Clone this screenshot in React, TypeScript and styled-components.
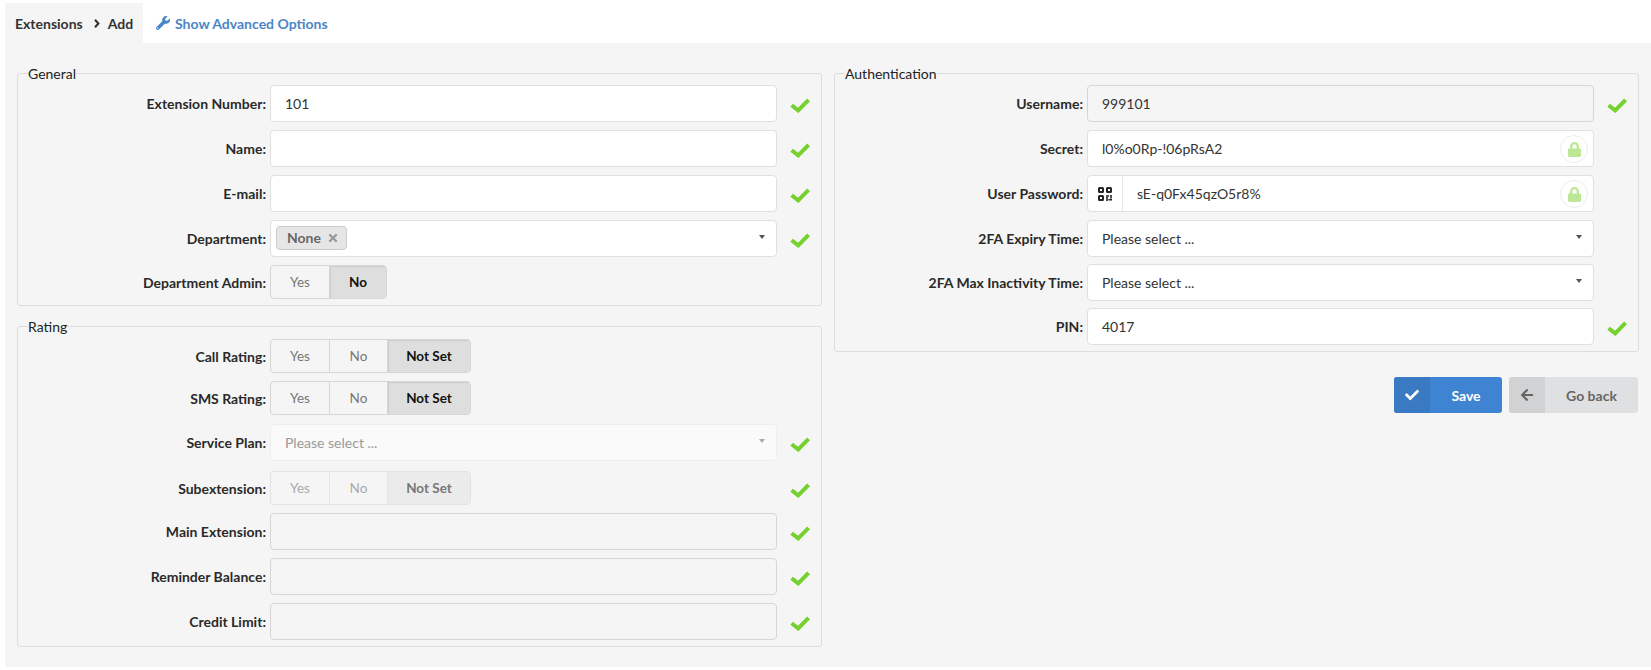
import React from 'react';
import styled, { createGlobalStyle } from 'styled-components';
import { FaArrowLeft, FaCheck, FaLock, FaTimes, FaWrench } from 'react-icons/fa';

const GlobalStyle = createGlobalStyle`
    html, body {
        margin: 0;
        background: #fff;
    }
    body {
        font-family: Lato, "Open Sans", sans-serif;
        font-size: 14px;
        color: #333;
    }
`;

const Page = styled.div`
    padding: 3px 0 3px 5px;
`;

const TabBar = styled.div`
    display: flex;
    height: 40px;
    align-items: stretch;
    font-weight: 700;
    font-size: 14px;
`;

const Crumbs = styled.div`
    display: flex;
    align-items: center;
    width: 138px;
    box-sizing: border-box;
    padding-left: 10px;
    background: #f5f5f5;
    color: #333;
    svg {
        margin: 0 8px 0 11px;
    }
`;

const AdvancedLink = styled.a`
    display: flex;
    align-items: center;
    gap: 5px;
    margin-left: 13px;
    color: #4a86c6;
    svg {
        font-size: 14px;
    }
`;

const Content = styled.div`
    display: grid;
    grid-template-columns: 805px 805px;
    gap: 12px;
    height: 624px;
    box-sizing: border-box;
    padding: 22px 12px 0;
    background: #f5f5f5;
`;

const Column = styled.div`
    display: flex;
    flex-direction: column;
    gap: 12px;
`;

const Box = styled.fieldset`
    margin: 0;
    padding: 3px 0 6px;
    min-width: 0;
    border: 1px solid #ddd;
    border-radius: 3px;
`;

const Legend = styled.legend`
    margin-left: 10px;
    padding: 0;
    line-height: 17px;
    font-size: 14px;
    color: #222;
`;

const Row = styled.div<{ $top?: number }>`
    display: flex;
    align-items: stretch;
    margin-top: ${p => p.$top ?? 8}px;
`;

const Label = styled.label`
    flex: 0 0 248px;
    margin-right: 4px;
    align-self: center;
    text-align: right;
    font-weight: 700;
    font-size: 14px;
    color: #2a2a2a;
`;

const Control = styled.div`
    flex: 1;
    min-width: 0;
    display: flex;
`;

const StatusCell = styled.div`
    flex: 0 0 44px;
    display: flex;
    align-items: center;
    box-sizing: border-box;
    padding: 4px 0 0 13px;
`;

const Field = styled.div<{ $variant?: 'plain' | 'readonly' | 'disabled' }>`
    position: relative;
    flex: 1;
    display: flex;
    align-items: center;
    height: 37px;
    box-sizing: border-box;
    padding-left: 14px;
    border-radius: 4px;
    border: 1px solid ${p => (p.$variant === 'readonly' ? '#d6d6d6' : p.$variant === 'disabled' ? '#eee' : '#e0e0e0')};
    background: ${p => (p.$variant === 'readonly' ? '#f5f5f5' : p.$variant === 'disabled' ? '#fafafa' : '#fff')};
    color: ${p => (p.$variant === 'disabled' ? '#999' : '#333')};
`;

const Caret = styled.span<{ $muted?: boolean }>`
    position: absolute;
    right: 11px;
    top: 14px;
    width: 0;
    height: 0;
    border-left: 3.5px solid transparent;
    border-right: 3.5px solid transparent;
    border-top: 4px solid ${p => (p.$muted ? '#aaa' : '#555')};
`;

const LockBadge = styled.span`
    position: absolute;
    right: 5px;
    top: 4px;
    width: 28px;
    height: 28px;
    box-sizing: border-box;
    display: flex;
    align-items: center;
    justify-content: center;
    border: 1px solid #eee;
    border-radius: 50%;
    color: #bce796;
    font-size: 15px;
`;

const QrAddon = styled.span`
    display: flex;
    align-items: center;
    justify-content: center;
    align-self: stretch;
    width: 34px;
    margin: 0 14px 0 -14px;
    border-right: 1px solid #e8e8e8;
    color: #222;
`;

const Chip = styled.span`
    display: inline-flex;
    align-items: center;
    gap: 6px;
    height: 24px;
    box-sizing: border-box;
    margin: -2px 0 0 -9px;
    padding: 0 7px 0 10px;
    border: 1px solid #ccc;
    border-radius: 4px;
    background: #e6e6e6;
    color: #666;
    font-weight: 700;
    svg {
        font-size: 12px;
        color: #999;
    }
`;

const Toggle = styled.div<{ $disabled?: boolean }>`
    display: inline-flex;
    height: 34px;
    box-sizing: border-box;
    border: 1px solid ${p => (p.$disabled ? '#e2e2e2' : '#d6d6d6')};
    border-radius: 4px;
    overflow: hidden;
`;

const ToggleOption = styled.span<{ $w: number; $active?: boolean; $disabled?: boolean }>`
    display: flex;
    align-items: center;
    justify-content: center;
    width: ${p => p.$w}px;
    box-sizing: border-box;
    border-left: 1px solid ${p => (p.$disabled ? '#e6e6e6' : '#d6d6d6')};
    &:first-child {
        border-left: 0;
    }
    font-size: 13.5px;
    font-weight: ${p => (p.$active ? 700 : 400)};
    color: ${p => (p.$disabled ? (p.$active ? '#777' : '#aaa') : p.$active ? '#111' : '#777')};
    background: ${p => (p.$active ? (p.$disabled ? '#ebebeb' : '#dedede') : 'transparent')};
    box-shadow: ${p => (p.$active && !p.$disabled ? 'inset 1px 1px 1px #ccc' : 'none')};
`;

const Actions = styled.div`
    display: flex;
    justify-content: flex-end;
    gap: 7px;
    margin-top: 13px;
    padding-right: 1px;
`;

const ActionButton = styled.button<{ $w: number; $tone: 'primary' | 'muted' }>`
    display: flex;
    align-items: stretch;
    width: ${p => p.$w}px;
    height: 36px;
    padding: 0;
    border: 0;
    border-radius: 3px;
    overflow: hidden;
    font-family: inherit;
    font-size: 14px;
    font-weight: 700;
    background: ${p => (p.$tone === 'primary' ? '#3f84d2' : '#dfe0e2')};
    color: ${p => (p.$tone === 'primary' ? '#fff' : '#666')};
`;

const ButtonIcon = styled.span<{ $tone: 'primary' | 'muted' }>`
    flex: 0 0 36px;
    display: flex;
    align-items: center;
    justify-content: center;
    background: ${p => (p.$tone === 'primary' ? '#3a7ac3' : '#d1d2d4')};
    font-size: 14px;
`;

const ButtonText = styled.span`
    flex: 1;
    align-self: center;
    text-align: center;
`;

const Check = () => (
    <StatusCell>
        <svg width="20" height="15" viewBox="0 0 20 15" fill="none">
            <polyline points="1.6,7.2 8.2,12.4 18.6,1.8" stroke="#76d12f" strokeWidth="4" />
        </svg>
    </StatusCell>
);

const Chevron = () => (
    <svg width="6" height="9" viewBox="0 0 6 9" fill="none">
        <polyline points="1,0.8 4.4,4.5 1,8.2" stroke="#333" strokeWidth="2.1" />
    </svg>
);

const QrIcon = () => (
    <svg width="14" height="14" viewBox="0 0 14 14" fill="none" stroke="#222" strokeWidth="2">
        <rect x="1" y="1" width="4" height="4" rx="0.5" />
        <rect x="9" y="1" width="4" height="4" rx="0.5" />
        <rect x="1" y="9" width="4" height="4" rx="0.5" />
        <path d="M8 9h3M13 8v3.4M9 10v4M10.5 12.8H14" strokeWidth="1.6" />
    </svg>
);

const Blank = styled.div`
    flex: 0 0 44px;
`;

type ToggleProps = { options: [string, number][]; active: string; disabled?: boolean };

const ToggleGroup = ({ options, active, disabled }: ToggleProps) => (
    <Toggle $disabled={disabled}>
        {options.map(([text, w]) => (
            <ToggleOption key={text} $w={w} $active={text === active} $disabled={disabled}>
                {text}
            </ToggleOption>
        ))}
    </Toggle>
);

const yesNo: [string, number][] = [['Yes', 58], ['No', 57]];
const yesNoNot: [string, number][] = [['Yes', 58], ['No', 58], ['Not Set', 83]];

export default function App() {
    return (
        <Page>
            <GlobalStyle />
            <TabBar>
                <Crumbs>
                    Extensions <Chevron /> Add
                </Crumbs>
                <AdvancedLink>
                    <FaWrench /> Show Advanced Options
                </AdvancedLink>
            </TabBar>
            <Content>
                <Column>
                    <Box>
                        <Legend>General</Legend>
                        <Row $top={0}>
                            <Label>Extension Number:</Label>
                            <Control><Field>101</Field></Control>
                            <Check />
                        </Row>
                        <Row>
                            <Label>Name:</Label>
                            <Control><Field /></Control>
                            <Check />
                        </Row>
                        <Row>
                            <Label>E-mail:</Label>
                            <Control><Field /></Control>
                            <Check />
                        </Row>
                        <Row>
                            <Label>Department:</Label>
                            <Control>
                                <Field>
                                    <Chip>None <FaTimes /></Chip>
                                    <Caret />
                                </Field>
                            </Control>
                            <Check />
                        </Row>
                        <Row>
                            <Label>Department Admin:</Label>
                            <Control><ToggleGroup options={yesNo} active="No" /></Control>
                            <Blank />
                        </Row>
                    </Box>
                    <Box>
                        <Legend>Rating</Legend>
                        <Row $top={1}>
                            <Label>Call Rating:</Label>
                            <Control><ToggleGroup options={yesNoNot} active="Not Set" /></Control>
                            <Blank />
                        </Row>
                        <Row>
                            <Label>SMS Rating:</Label>
                            <Control><ToggleGroup options={yesNoNot} active="Not Set" /></Control>
                            <Blank />
                        </Row>
                        <Row $top={9}>
                            <Label>Service Plan:</Label>
                            <Control>
                                <Field $variant="disabled">
                                    Please select ...
                                    <Caret $muted />
                                </Field>
                            </Control>
                            <Check />
                        </Row>
                        <Row $top={10}>
                            <Label>Subextension:</Label>
                            <Control><ToggleGroup options={yesNoNot} active="Not Set" disabled /></Control>
                            <Check />
                        </Row>
                        <Row>
                            <Label>Main Extension:</Label>
                            <Control><Field $variant="readonly" /></Control>
                            <Check />
                        </Row>
                        <Row>
                            <Label>Reminder Balance:</Label>
                            <Control><Field $variant="readonly" /></Control>
                            <Check />
                        </Row>
                        <Row>
                            <Label>Credit Limit:</Label>
                            <Control><Field $variant="readonly" /></Control>
                            <Check />
                        </Row>
                    </Box>
                </Column>
                <Column>
                    <Box>
                        <Legend>Authentication</Legend>
                        <Row $top={0}>
                            <Label>Username:</Label>
                            <Control><Field $variant="readonly">999101</Field></Control>
                            <Check />
                        </Row>
                        <Row>
                            <Label>Secret:</Label>
                            <Control>
                                <Field>
                                    l0%o0Rp-!06pRsA2
                                    <LockBadge><FaLock /></LockBadge>
                                </Field>
                            </Control>
                            <Blank />
                        </Row>
                        <Row>
                            <Label>User Password:</Label>
                            <Control>
                                <Field>
                                    <QrAddon><QrIcon /></QrAddon>
                                    sE-q0Fx45qzO5r8%
                                    <LockBadge><FaLock /></LockBadge>
                                </Field>
                            </Control>
                            <Blank />
                        </Row>
                        <Row>
                            <Label>2FA Expiry Time:</Label>
                            <Control>
                                <Field>
                                    Please select ...
                                    <Caret />
                                </Field>
                            </Control>
                            <Blank />
                        </Row>
                        <Row $top={7}>
                            <Label>2FA Max Inactivity Time:</Label>
                            <Control>
                                <Field>
                                    Please select ...
                                    <Caret />
                                </Field>
                            </Control>
                            <Blank />
                        </Row>
                        <Row $top={7}>
                            <Label>PIN:</Label>
                            <Control><Field>4017</Field></Control>
                            <Check />
                        </Row>
                    </Box>
                    <Actions>
                        <ActionButton $w={108} $tone="primary">
                            <ButtonIcon $tone="primary"><FaCheck /></ButtonIcon>
                            <ButtonText>Save</ButtonText>
                        </ActionButton>
                        <ActionButton $w={129} $tone="muted">
                            <ButtonIcon $tone="muted"><FaArrowLeft /></ButtonIcon>
                            <ButtonText>Go back</ButtonText>
                        </ActionButton>
                    </Actions>
                </Column>
            </Content>
        </Page>
    );
}
